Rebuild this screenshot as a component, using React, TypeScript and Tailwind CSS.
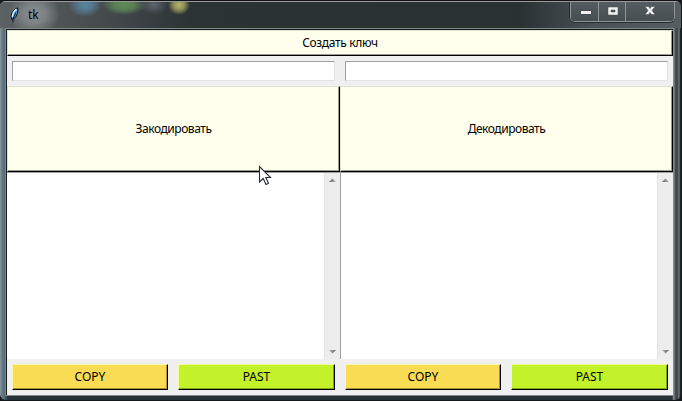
import React from "react";

const cream =
  "flex items-center justify-center bg-[#ffffee] border border-t-[#e3e3d4] border-l-[#e3e3d4] border-r-black border-b-black shadow-[inset_-1px_-1px_0_#9b9b8c]";

function Cream({ label, className }: { label: string; className: string }) {
  return (
    <button className={`${cream} ${className}`}>
      <span>{label}</span>
    </button>
  );
}

function Entry() {
  return (
    <div className="mx-[5px] h-5 flex-1 border border-t-[#a0a0a0] border-l-[#a0a0a0] border-r-[#e3e3e3] border-b-[#e3e3e3] bg-white" />
  );
}

function Arrow({ down = false }: { down?: boolean }) {
  return (
    <svg width="9" height="5" viewBox="0 0 9 5" className={down ? "rotate-180" : ""}>
      <defs>
        <linearGradient id="arrow" x1="0" x2="1">
          <stop offset="0" stopColor="#606060" />
          <stop offset="1" stopColor="#b8b8b8" />
        </linearGradient>
      </defs>
      <path d="M4.5 0.5 L8 4 H1 Z" fill="url(#arrow)" />
    </svg>
  );
}

function TextPane() {
  return (
    <div className="flex flex-1 border-t border-l border-t-[#a0a0a0] border-l-[#a0a0a0] bg-white first:border-l-0">
      <div className="flex-1" />
      <div className="flex w-4 flex-col items-center justify-between border-l border-[#e3e3e3] bg-[#ededed] pt-[5px] pb-[5px]">
        <Arrow />
        <Arrow down />
      </div>
    </div>
  );
}

function Action({ label, green = false }: { label: string; green?: boolean }) {
  return (
    <button
      className={`flex h-[26px] shrink-0 items-center justify-center border border-r-black border-b-black ${
        green
          ? "mr-[5px] ml-[5px] w-[157px] border-t-[#efff9c] border-l-[#efff9c] bg-[#c3f22a] shadow-[inset_-1px_-1px_0_#82a71c]"
          : "mr-[5px] ml-[5px] w-[156px] border-t-[#fff6ae] border-l-[#fff6ae] bg-[#f9dc54] shadow-[inset_-1px_-1px_0_#a69238]"
      }`}
    >
      <span>{label}</span>
    </button>
  );
}

function Feather() {
  return (
    <svg width="12" height="16" viewBox="0 0 12 16">
      <path d="M8.8 .8 C5.5 1.8 2.5 5 2 9 L2.8 12.5 L5.2 11.5 C8 9 9.3 5 8.8 .8Z" fill="#4f9ee0" stroke="#080b18" strokeWidth="1" />
      <path d="M7.6 2.2 C5 4 3.6 7 3.3 10" fill="none" stroke="#cceeff" strokeWidth="1.5" />
      <path d="M6.8 5.5 L4 12 V15.5" fill="none" stroke="#0c1228" strokeWidth="1" />
    </svg>
  );
}

function Controls() {
  return (
    <div className="flex h-5 w-[105px] overflow-hidden rounded-b-[5px] border border-t-0 border-[#8f9496] bg-[#4b5457] shadow-[0_1px_0_0_#252b2e,-1px_0_0_0_#252b2e]">
      <div className="w-[28px] border-r border-[#8f9496] bg-gradient-to-b from-[#555c60] to-[#454e51]">
        <svg width="27" height="18" viewBox="0 0 27 18">
          <rect x="9.5" y="8.5" width="11" height="4" fill="#f1f1f1" stroke="#464d51" />
        </svg>
      </div>
      <div className="w-[27px] border-r border-[#8f9496] bg-gradient-to-b from-[#555c60] to-[#454e51]">
        <svg width="26" height="18" viewBox="0 0 26 18">
          <path fillRule="evenodd" d="M8 4H18V12H8Z M11 7V9H15V7Z" transform="translate(1 1)" fill="#f1f1f1" stroke="#464d51" strokeWidth=".5" />
        </svg>
      </div>
      <div className="flex-1 bg-gradient-to-b from-[#555c60] to-[#454e51]">
        <svg width="46" height="18" viewBox="0 0 46 18">
          <path d="M18 4H21.5L23 6L24.5 4H28L25 8L28 12H24.5L23 10L21.5 12H18L21 8Z" transform="translate(1 0.5)" fill="#f1f1f1" stroke="#464d51" strokeWidth=".5" />
        </svg>
      </div>
    </div>
  );
}

export default function App() {
  return (
    <div className="relative h-[401px] w-[682px] overflow-hidden bg-[#14191c] font-['Noto_Sans','Open_Sans',sans-serif] text-[12px] leading-4 text-black">
      <div className="flex h-[400px] w-[681px] flex-col overflow-hidden rounded-[6px] border-t border-[#111] bg-[linear-gradient(90deg,#8b989e_0px,#647b87_2px,#5b717c_4px,#273238_8px,#273238_672px,#8d9599_674px,#465054_675px,#3b4549_678px,#8a9296_679px,#20272a_680px)]">
        <div className="flex h-[27px] shrink-0 justify-between border-t border-[#999da0] bg-[radial-gradient(ellipse_26px_22px_at_34px_12px,#8b8f92_0%,#7c8184_45%,transparent_100%),radial-gradient(ellipse_17px_12px_at_85px_3px,#5784a0_0%,#55788e_40%,transparent_100%),radial-gradient(ellipse_22px_10px_at_124px_3px,#5f8c58_0%,#587b54_50%,transparent_100%),radial-gradient(ellipse_14px_10px_at_154px_3px,#5c646e_0%,transparent_100%),radial-gradient(ellipse_11px_10px_at_179px_3px,#b8b866_0%,#8b8d58_50%,transparent_100%),linear-gradient(90deg,#5c6164_0,#44494c_110px,#2b3335_190px,#293133_520px,#485154_590px,#555e61_100%)] pr-[6px] pl-[9px]">
          <div className="flex items-start pt-[5px]">
            <Feather />
            <span className="ml-[7px] tracking-[-0.2px]">tk</span>
          </div>
          <Controls />
        </div>
        <div className="ml-[5px] flex h-[368px] w-[669px] shrink-0 flex-col border border-[#81898d] bg-[#f0f0f0] shadow-[inset_1px_1px_0_#15191b]">
          <div className="flex h-[365px] w-[667px] flex-col pt-px pl-px">
            <Cream label="Создать ключ" className="h-[26px] w-full shrink-0 tracking-[-0.35px]" />
            <div className="flex h-[30px] shrink-0 items-center">
              <Entry />
              <Entry />
            </div>
            <div className="flex h-[86px] shrink-0 tracking-[-0.45px]">
              <Cream label="Закодировать" className="flex-1" />
              <Cream label="Декодировать" className="flex-1" />
            </div>
            <div className="flex h-[187px] shrink-0">
              <TextPane />
              <TextPane />
            </div>
            <div className="flex h-[36px] shrink-0 items-center">
              <Action label="COPY" />
              <Action label="PAST" green />
              <Action label="COPY" />
              <Action label="PAST" green />
            </div>
          </div>
        </div>
      </div>
      <svg className="absolute top-[165px] left-[258px]" width="14" height="22" viewBox="0 0 14 22">
        <path d="M1.5 1.5V17L5.2 13.5L8 19.5L10.5 18.3L7.8 12.5H12.5Z" fill="#fff" stroke="#252b36" strokeWidth="1.1" />
      </svg>
    </div>
  );
}
